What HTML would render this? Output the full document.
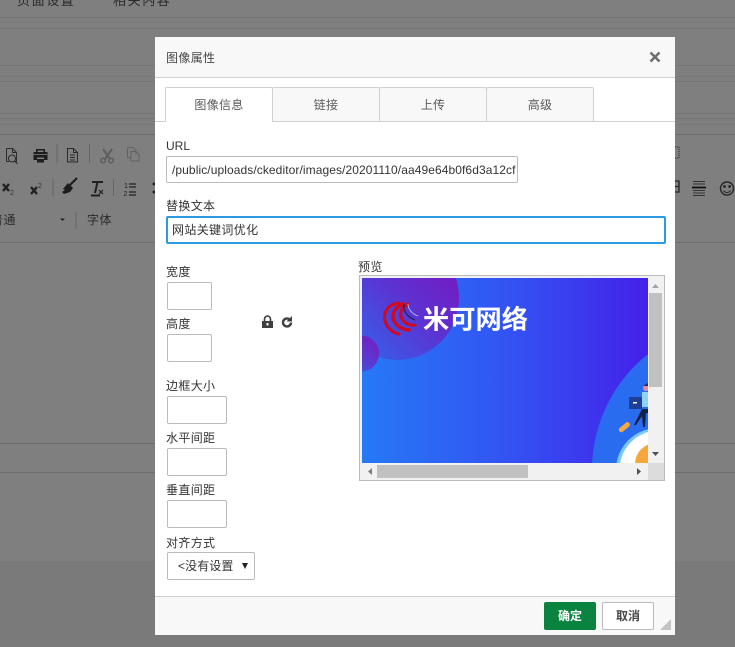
<!DOCTYPE html>
<html lang="zh"><head><meta charset="utf-8"><title>图像属性</title>
<style>
html,body{margin:0;padding:0}
body{width:735px;height:647px;overflow:hidden;position:relative;background:#7f7f7f;font-family:"Liberation Sans","Noto Sans CJK SC",sans-serif;font-size:12px;color:#333}
.a{position:absolute}
.l{position:absolute;left:0;width:735px;height:1px;background:#6f6f6f}
.f{position:absolute;left:0;width:735px;height:1px;background:#7a7a7a}
.t{position:absolute;white-space:nowrap;line-height:16px}
.i{position:absolute;box-sizing:border-box;border:1px solid #bbb;border-radius:2px;background:#fff}
.tab{position:absolute;top:87px;height:34px;box-sizing:border-box;border:1px solid #d1d1d1;border-bottom:0;border-radius:2px 2px 0 0;background:#f8f8f8;color:#595959;text-align:center;line-height:34px;letter-spacing:.3px}
.dark{color:#333;letter-spacing:.35px}
</style></head><body>
<div class="t" style="left:17px;top:-7px;color:#2a2a2a;font-size:13px;letter-spacing:1.6px">页面设置</div>
<div class="t" style="left:113px;top:-7px;color:#2a2a2a;font-size:13px;letter-spacing:1.6px">相关内容</div>
<div class="l" style="top:17px;background:#747474"></div><div class="f" style="top:22px"></div>
<div class="l" style="top:28px;background:#747474"></div><div class="l" style="top:65px;background:#747474"></div>
<div class="f" style="top:76px"></div><div class="l" style="top:81px;background:#747474"></div>
<div class="l" style="top:113px;background:#747474"></div><div class="l" style="top:118px;background:#767676"></div>
<div class="f" style="top:124px"></div><div class="l" style="top:134px;background:#6c6c6c"></div>
<div class="l" style="top:242px;background:#6e6e6e"></div>
<div class="l" style="top:443px;background:#6c6c6c"></div><div class="l" style="top:472px;background:#6c6c6c"></div>
<div class="a" style="left:0;top:561px;width:735px;height:86px;background:#7a7a7a"></div>

<svg class="a" style="left:0;top:135px" width="155" height="107" viewBox="0 135 155 107" fill="none">
<g stroke="#2b2b2b" stroke-width="1">
<path d="M6.500 148.500h6l4 4v9h-2M9 161.500H6.500zM12.500 148.500v4h4"/><path d="M6.500 148.500v13"/><circle cx="12" cy="158.500" r="3.500"/><path d="M14.500 161l3 3"/>
</g>
<path d="M36 149h9v3h2.500v8H44v-2.500h-7V160h-3.500v-8H36zM37.500 150.500v1.500h6v-1.500zM37 159h7v3.500h-7z" fill="#1d1d1d"/>
<path d="M33 154.500h14" stroke="#7f7f7f" stroke-width=".8"/>
<path d="M57 144v19M89.500 144v19M53 179v17M113.500 179v17M76 212v17" stroke="#666"/>
<path d="M67.500 148.500h6l4 4v9.500h-10zM73.500 148.500v4h4M70 155h5M70 157.500h5M70 160h5" stroke="#2b2b2b"/>
<path d="M103 149l7 10M112 149l-7 10" stroke="#5d5d5d" stroke-width="2"/><circle cx="103" cy="160.500" r="2.300" stroke="#5d5d5d" stroke-width="1.500"/><circle cx="111" cy="160.500" r="2.300" stroke="#5d5d5d" stroke-width="1.500"/>
<path d="M128 147.500h5l3 3v4M127.500 147.500v10h3M131 151.500h5l3 3v6.500h-8z" stroke="#626262"/>
<path d="M3 184l6 7M9 184l-6 7" stroke="#202020" stroke-width="2.400"/>
<text x="10" y="195" font-size="7" fill="#333" font-family="Liberation Sans">2</text>
<path d="M31 187l6 7M37 187l-6 7" stroke="#202020" stroke-width="2.400"/>
<text x="38" y="188" font-size="7" fill="#333" font-family="Liberation Sans">2</text>
<path d="M77 178l-7 7" stroke="#1c1c1c" stroke-width="2"/><path d="M68 183l5 5-3 4-6 2-2-2 3-2-2-1z" fill="#1c1c1c"/>
<path d="M92 182h11M97.500 182l-2.500 11M91 195.500h9" stroke="#202020" stroke-width="2"/>
<path d="M99 190l4 4M103 190l-4 4" stroke="#202020" stroke-width="1.200"/>
<path d="M129 184h7M129 187h7M129 192h7M129 195h7" stroke="#222" stroke-width="1.200"/>
<text x="124" y="188" font-size="7" fill="#222" font-family="Liberation Sans">1</text>
<text x="123.500" y="196" font-size="7" fill="#222" font-family="Liberation Sans">2</text>
<circle cx="154" cy="184" r="1.500" fill="#222"/><circle cx="154" cy="192" r="1.500" fill="#222"/>
<path d="M60 218.500h5l-2.500 2.500z" fill="#222"/>
</svg>
<div class="t" style="left:-9px;top:212px;color:#2a2a2a;letter-spacing:.5px">普通</div>
<div class="t" style="left:87px;top:212px;color:#2a2a2a;letter-spacing:.5px">字体</div>
<svg class="a" style="left:675px;top:135px" width="60" height="70" viewBox="675 135 60 70" fill="none" stroke="#262626">
<path d="M675 147h4v11h-4" stroke-dasharray="1 1"/>
<path d="M675 181h4v11h-4M675 186.500h4" stroke-width="1.300"/>
<path d="M693 181.500h12M693 184h12M693 190.500h12M693 193h12M693 195.500h12" stroke="#333"/><path d="M692 187.500h14" stroke="#111" stroke-width="1.800"/>
<circle cx="727" cy="188.500" r="6.500" stroke-width="1.400"/><circle cx="724.500" cy="186.500" r=".9" fill="#262626"/><circle cx="729.500" cy="186.500" r=".9" fill="#262626"/><path d="M723.500 190.500c1.500 2.600 5.500 2.600 7 0"/>
</svg>

<div class="a" style="left:155px;top:37px;width:520px;height:598px;background:#fff"></div>
<div class="a" style="left:155px;top:37px;width:520px;height:40px;background:#f8f8f8;border-bottom:1px solid #d1d1d1"></div>
<div class="t dark" style="left:166px;top:50px;color:#474747">图像属性</div>
<svg class="a" style="left:649px;top:51px" width="12" height="12" viewBox="0 0 12 12"><path d="M1.500 1.500l9 9M10.500 1.500l-9 9" stroke="#6f6f6f" stroke-width="2.600"/></svg>

<div class="a" style="left:155px;top:121px;width:520px;height:1px;background:#d1d1d1"></div>
<div class="tab" style="left:165px;width:108px;height:35px;background:#fff;color:#595959">图像信息</div>
<div class="tab" style="left:272px;width:108px">链接</div>
<div class="tab" style="left:379px;width:108px">上传</div>
<div class="tab" style="left:486px;width:108px">高级</div>

<div class="t" style="left:166px;top:138px">URL</div>
<div class="i" style="left:166px;top:156px;width:352px;height:27px"></div>
<div class="t" style="left:172px;top:162px;color:#333;width:345px;overflow:hidden;letter-spacing:.085px">/public/uploads/ckeditor/images/20201110/aa49e64b0f6d3a12cf</div>
<div class="t dark" style="left:166px;top:198px">替换文本</div>
<div class="i" style="left:166px;top:216px;width:500px;height:28px;border:2px solid #2c9ae0"></div>
<div class="t dark" style="left:172px;top:222px">网站关键词优化</div>

<div class="t dark" style="left:166px;top:264px">宽度</div>
<div class="i" style="left:167px;top:282px;width:45px;height:28px"></div>
<div class="t dark" style="left:166px;top:316px">高度</div>
<div class="i" style="left:167px;top:334px;width:45px;height:28px"></div>
<svg class="a" style="left:261px;top:315px" width="34" height="14" viewBox="0 0 34 14">
<path d="M1 6h11v7H1z" fill="#3f3f3f"/><path d="M3.500 6V4a3 3 0 0 1 6 0v2" fill="none" stroke="#3f3f3f" stroke-width="1.600"/><rect x="5.500" y="8" width="2" height="2.500" fill="#fff"/>
<path d="M30 7.500a4 4 0 1 1-1.400-3.100" fill="none" stroke="#3f3f3f" stroke-width="2.400"/><path d="M31 1v5.500h-5.500z" fill="#3f3f3f"/>
</svg>
<div class="t dark" style="left:166px;top:378px">边框大小</div>
<div class="i" style="left:167px;top:396px;width:60px;height:28px"></div>
<div class="t dark" style="left:166px;top:430px">水平间距</div>
<div class="i" style="left:167px;top:448px;width:60px;height:28px"></div>
<div class="t dark" style="left:166px;top:482px">垂直间距</div>
<div class="i" style="left:167px;top:500px;width:60px;height:28px"></div>
<div class="t dark" style="left:166px;top:535px">对齐方式</div>
<div class="i" style="left:167px;top:552px;width:88px;height:28px"></div>
<div class="t" style="left:178px;top:558px;letter-spacing:.1px">&lt;没有设置</div>
<svg class="a" style="left:242px;top:563px" width="6" height="6"><path d="M0 0h6L3 6z" fill="#222"/></svg>

<div class="t dark" style="left:358px;top:259px">预览</div>
<div class="a" style="left:359px;top:275px;width:306px;height:206px;box-sizing:border-box;border:1px solid #bbb;background:#f1f1f1"></div>
<svg class="a" style="left:362px;top:278px" width="286" height="185" viewBox="362 278 286 185">
<defs>
<linearGradient id="bg" x1="0" x2="1" y1="0" y2="0"><stop offset="0" stop-color="#2679f6"/><stop offset=".55" stop-color="#3450f2"/><stop offset="1" stop-color="#4420ea"/></linearGradient>
<linearGradient id="c1" x1="1" y1="0" x2="0" y2="1"><stop offset="0" stop-color="#8010b8"/><stop offset=".45" stop-color="#5e30d0"/><stop offset="1" stop-color="#2a6ef2"/></linearGradient>
<linearGradient id="c2" x1="1" y1="0" x2="0" y2="1"><stop offset="0" stop-color="#7a18bc"/><stop offset="1" stop-color="#3a5ce6"/></linearGradient>
</defs>
<rect x="362" y="278" width="286" height="185" fill="url(#bg)"/>
<circle cx="397" cy="298" r="62" fill="url(#c1)"/>
<circle cx="361" cy="353.500" r="18" fill="url(#c2)"/>
<g fill="none" stroke="#cf0a1e" stroke-linecap="round">
<path d="M399 303c-11 1-16 9-14 18 2 7 8 12 14 13" stroke-width="3"/>
<path d="M403 304c-8 3-12 10-9 17 3 6 10 9 15 9" stroke-width="3.400"/>
<path d="M408 304c-7 4-9 10-6 15 3 5 9 7 13 6" stroke-width="3"/>
</g>
<path d="M404 304c-1 6 2 12 11 16" fill="none" stroke="#20204a" stroke-width="1.200"/>
<path d="M408 304c0 5 4 10 10 12" fill="none" stroke="#c8c8e8" stroke-width=".8"/>
<text x="423" y="328.500" font-size="26" font-weight="700" fill="#fff" font-family="Noto Sans CJK SC, sans-serif" textLength="105" lengthAdjust="spacingAndGlyphs">米可网络</text>
<circle cx="740" cy="470" r="148" fill="#2a6cf0"/>
<circle cx="658" cy="470" r="42" fill="#79c8f4"/>
<circle cx="659" cy="470" r="39.500" fill="#fff"/>
<circle cx="656" cy="464" r="21" fill="#f5a83c"/>
<rect x="618" y="425" width="13" height="5" rx="2.500" fill="#f5a83c" transform="rotate(-40 624 427.500)"/>
<rect x="629" y="397" width="13" height="12" fill="#1e3f96"/>
<rect x="633" y="402" width="4" height="1.500" fill="#fff"/>
<path d="M642 409h6v4h-2l-1 14h-2l-1-11-6 9h-2z" fill="#13204a"/>
<rect x="642" y="392" width="6" height="15" fill="#8ed3f2"/>
<circle cx="646" cy="388" r="3" fill="#e88a9a"/>
<path d="M643 386l5-3v3z" fill="#222a5a"/>
</svg>
<div class="a" style="left:649px;top:293px;width:13px;height:94px;background:#c1c1c1"></div>
<div class="a" style="left:377px;top:465px;width:151px;height:13px;background:#c1c1c1"></div>
<div class="a" style="left:648px;top:463px;width:16px;height:17px;background:#dcdcdc"></div>
<svg class="a" style="left:360px;top:276px" width="304" height="204" viewBox="360 276 304 204">
<path d="M652 288l3.500-4 3.500 4z" fill="#a3a3a3"/><path d="M652 452h7l-3.500 4z" fill="#505050"/>
<path d="M372 468v7l-4-3.500z" fill="#7d7d7d"/><path d="M637 468v7l4-3.500z" fill="#505050"/>
</svg>

<div class="a" style="left:155px;top:596px;width:520px;height:39px;box-sizing:border-box;background:#f8f8f8;border-top:1px solid #d1d1d1"></div>
<div class="a" style="left:544px;top:602px;width:52px;height:28px;background:#09833f;border-radius:2px;color:#fff;text-align:center;line-height:28px;font-weight:700">确定</div>
<div class="a" style="left:602px;top:602px;width:52px;height:28px;box-sizing:border-box;background:#fff;border:1px solid #bbb;border-radius:2px;color:#484848;text-align:center;line-height:26px;font-weight:700">取消</div>
<svg class="a" style="left:660px;top:619px" width="11" height="11"><path d="M11 0v11H0z" fill="#c4c4c4"/></svg>
</body></html>
